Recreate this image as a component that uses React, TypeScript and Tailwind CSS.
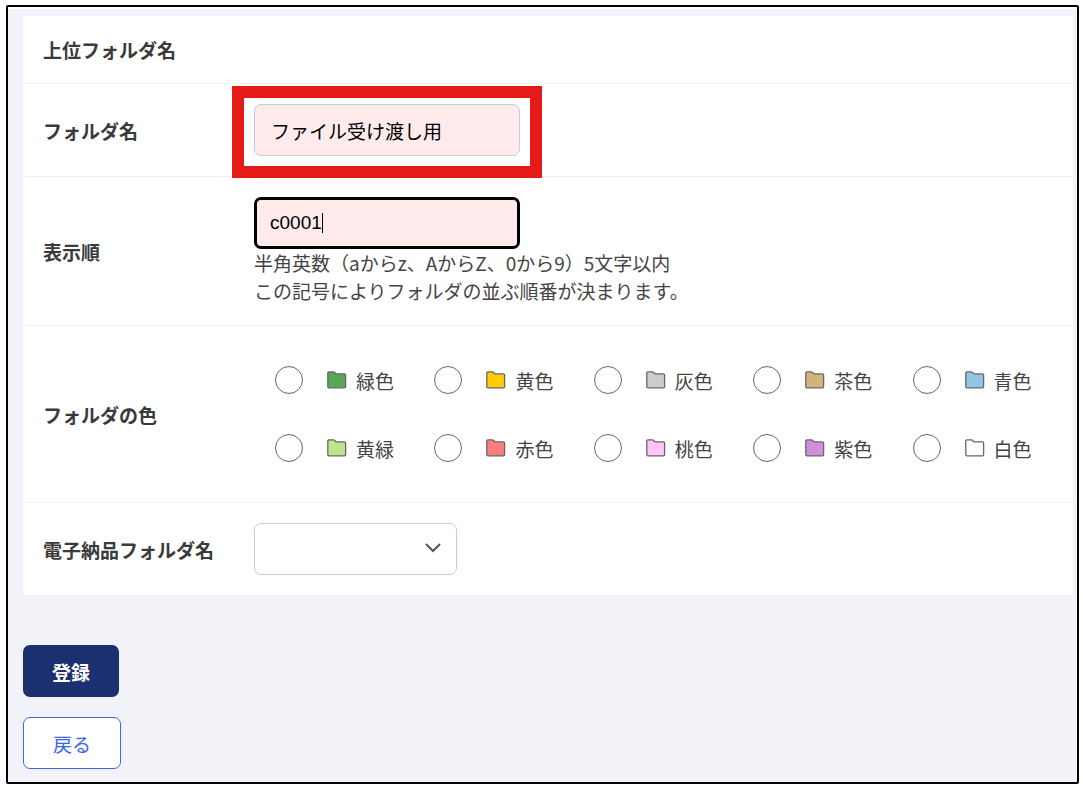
import { useState, type ReactNode } from "react";

const colors = [
  { id: "green", label: "緑色", fill: "#56a956" },
  { id: "yellow", label: "黄色", fill: "#ffcc00" },
  { id: "gray", label: "灰色", fill: "#cccccc" },
  { id: "brown", label: "茶色", fill: "#d2b478" },
  { id: "blue", label: "青色", fill: "#8fc7e4" },
  { id: "lime", label: "黄緑", fill: "#c2e28b" },
  { id: "red", label: "赤色", fill: "#ff7d7d" },
  { id: "pink", label: "桃色", fill: "#ffc5fa" },
  { id: "purple", label: "紫色", fill: "#cf8fdc" },
  { id: "white", label: "白色", fill: "#ffffff" },
];

function FolderIcon({ fill }: { fill: string }) {
  return (
    <svg width="20" height="18" viewBox="0 0 20 18" className="shrink-0" aria-hidden="true">
      <path
        d="M1.6 0.9H7L9.2 2.9H17.4Q18.6 2.9 18.6 4.1V15.6Q18.6 16.8 17.4 16.8H2Q0.8 16.8 0.8 15.6V1.9Q0.8 0.9 1.8 0.9Z"
        fill={fill}
        stroke="#666666"
        strokeWidth="1.3"
        strokeLinejoin="round"
      />
    </svg>
  );
}

function Row({ label, htmlFor, id, children }: { label: string; htmlFor?: string; id?: string; children?: ReactNode }) {
  return (
    <div className="flex items-center border-b border-[#f1f2f6] px-5 py-5 last:border-b-0">
      <div className="w-[211px] shrink-0 font-bold text-[#3a3a3a]">
        {htmlFor ? <label htmlFor={htmlFor}>{label}</label> : <span id={id}>{label}</span>}
      </div>
      <div className="min-w-0 flex-1">{children}</div>
    </div>
  );
}

export default function App() {
  const [name, setName] = useState("ファイル受け渡し用");
  const [order, setOrder] = useState("c0001");
  const [color, setColor] = useState("");

  return (
    <div className="flex min-h-screen bg-white pt-[5px] pr-1 pb-1 pl-[6px] font-['Noto_Sans_CJK_JP',sans-serif] text-[19px] leading-[27px] text-[#444444]">
      <div className="flex flex-1 flex-col rounded-[2px] border-2 border-black pt-[2px]">
        <form className="flex-1 bg-[#f2f3f8] pt-[7px] pr-1 pb-3 pl-[15px]" onSubmit={(e) => e.preventDefault()}>
          <div className="bg-white">
            <Row label="上位フォルダ名" />
            <Row label="フォルダ名" htmlFor="folder-name">
              <div className="relative w-[266px]">
                <input
                  id="folder-name"
                  value={name}
                  onChange={(e) => setName(e.target.value)}
                  className="block h-[52px] w-full rounded-[7px] border border-[#cccccc] bg-[#ffebeb] px-4 text-black"
                />
                <div className="pointer-events-none absolute -top-[18px] -right-[22px] -bottom-[22px] -left-[22px] border-12 border-[#e71a1a]" />
              </div>
            </Row>
            <Row label="表示順" htmlFor="folder-order">
              <div className="relative w-[266px]">
                <input
                  id="folder-order"
                  value={order}
                  onChange={(e) => setOrder(e.target.value)}
                  maxLength={5}
                  aria-describedby="order-help"
                  className="block h-[52px] w-full rounded-[7px] border-3 border-black bg-[#ffebeb] px-[13px] font-['Liberation_Sans',sans-serif] text-black outline-none"
                />
                <div className="pointer-events-none absolute top-4 left-[68px] h-5 w-px bg-black" />
              </div>
              <p id="order-help" className="leading-7">
                半角英数（aからz、AからZ、0から9）5文字以内
                <br />
                この記号によりフォルダの並ぶ順番が決まります。
              </p>
            </Row>
            <Row label="フォルダの色" id="color-label">
              <div role="radiogroup" aria-labelledby="color-label" className="grid grid-cols-5 pr-0.5">
                {colors.map((c) => (
                  <label key={c.id} className="flex h-[68px] items-center pl-[21px] whitespace-nowrap">
                    <input
                      type="radio"
                      name="color"
                      value={c.id}
                      checked={color === c.id}
                      onChange={() => setColor(c.id)}
                      className="mr-6 size-7 shrink-0 appearance-none rounded-full border border-[#666666] bg-white checked:border-8 checked:border-[#1c3070]"
                    />
                    <FolderIcon fill={c.fill} />
                    <span className="ml-[9px]">{c.label}</span>
                  </label>
                ))}
              </div>
            </Row>
            <Row label="電子納品フォルダ名" htmlFor="delivery-folder">
              <div className="relative w-[203px]">
                <select
                  id="delivery-folder"
                  className="block h-[52px] w-full appearance-none rounded-[7px] border border-[#cccccc] bg-white px-4"
                >
                  <option value=""></option>
                </select>
                <svg
                  width="16"
                  height="10"
                  viewBox="0 0 16 10"
                  className="pointer-events-none absolute top-5 right-4"
                  aria-hidden="true"
                >
                  <path d="M1.5 1.5L8 8L14.5 1.5" fill="none" stroke="#555555" strokeWidth="2" strokeLinecap="round" />
                </svg>
              </div>
            </Row>
          </div>
          <div className="mt-[50px] flex flex-col items-start gap-5">
            <button type="submit" className="h-[52px] rounded-[7px] bg-[#1c3070] px-[29px] font-bold text-white">
              登録
            </button>
            <button type="button" className="h-[52px] rounded-[7px] border border-[#3c66e6] bg-white px-[29px] text-[#3c66e6]">
              戻る
            </button>
          </div>
        </form>
      </div>
    </div>
  );
}
